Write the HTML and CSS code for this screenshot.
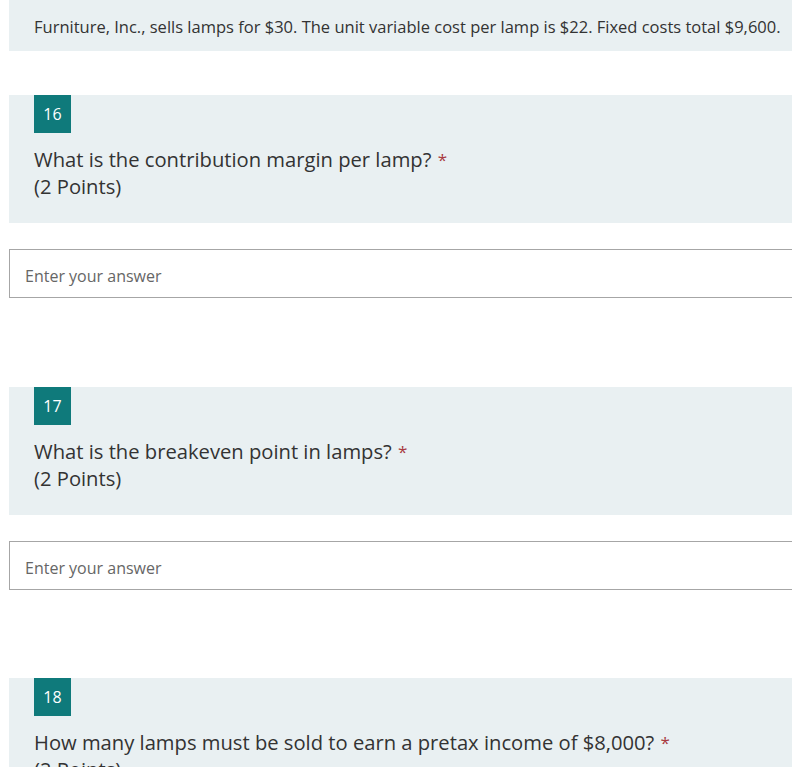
FILE: index.html
```html
<!DOCTYPE html>
<html>
<head>
<meta charset="utf-8">
<link rel="stylesheet" href="styles.css">
</head>
<body>
<div class="page">
  <div class="intro">Furniture, Inc., sells lamps for $30. The unit variable cost per lamp is $22. Fixed costs total $9,600.</div>

  <div class="question">
    <div class="q-head">
      <div class="badge">16</div>
      <div class="q-title">What is the contribution margin per lamp? <span class="req">*</span></div>
      <div class="q-points">(2 Points)</div>
    </div>
    <div class="answer">Enter your answer</div>
  </div>

  <div class="question">
    <div class="q-head">
      <div class="badge">17</div>
      <div class="q-title">What is the breakeven point in lamps? <span class="req">*</span></div>
      <div class="q-points">(2 Points)</div>
    </div>
    <div class="answer">Enter your answer</div>
  </div>

  <div class="question last">
    <div class="q-head">
      <div class="badge">18</div>
      <div class="q-title">How many lamps must be sold to earn a pretax income of $8,000? <span class="req">*</span></div>
      <div class="q-points">(2 Points)</div>
    </div>
    <div class="answer">Enter your answer</div>
  </div>
</div>
</body>
</html>
```

FILE: styles.css
```css
html, body {
  margin: 0;
  padding: 0;
  background: #ffffff;
  overflow: hidden;
}

body {
  font-family: "Open Sans", "Noto Sans", sans-serif;
  color: #333333;
}

.page {
  margin-left: 9px;
  width: 800px;
}

.intro {
  background: #e9f0f2;
  height: 51px;
  box-sizing: border-box;
  padding: 15px 25px 0;
  font-size: 16.5px;
  line-height: 24px;
  white-space: nowrap;
}

.question {
  margin-top: 44px;
}

.question + .question {
  margin-top: 89px;
}

.question.last {
  margin-top: 88px;
}

.q-head {
  background: #e9f0f2;
  padding: 0 25px 23px;
}

.badge {
  width: 37px;
  height: 38px;
  background: #0f7a7b;
  color: #ffffff;
  font-size: 16px;
  line-height: 38px;
  text-align: center;
  margin-bottom: 13px;
}

.q-title, .q-points {
  font-size: 20.2px;
  line-height: 27px;
  height: 27px;
  white-space: nowrap;
}

.req {
  color: #a83a40;
  font-size: 17px;
  line-height: 1;
  margin-left: 1px;
  position: relative;
  top: -1px;
}

.answer {
  margin-top: 26px;
  height: 49px;
  box-sizing: border-box;
  border: 1px solid #a6a6a6;
  padding: 5px 0 0 15px;
  font-size: 16px;
  line-height: 42px;
  color: #666666;
  background: #ffffff;
}
```
